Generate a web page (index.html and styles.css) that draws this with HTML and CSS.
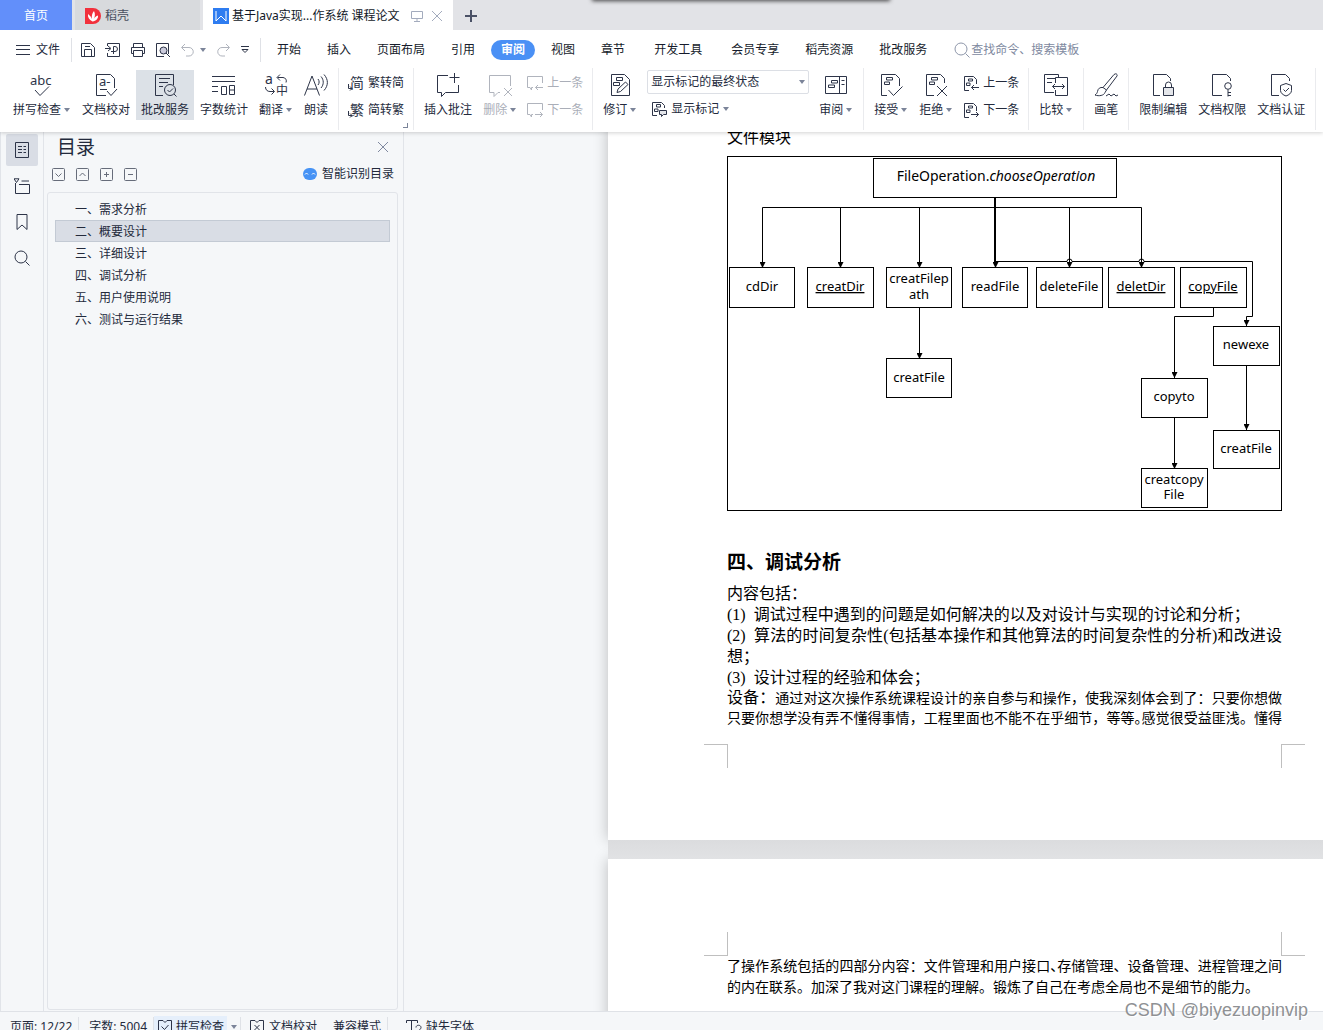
FILE: index.html
```html
<!DOCTYPE html>
<html lang="zh-CN">
<head>
<meta charset="utf-8">
<title>基于Java实现...作系统 课程论文</title>
<link rel="stylesheet" href="styles.css">
</head>
<body>
<svg class="sprite" aria-hidden="true">
  <symbol id="caret" viewBox="0 0 6 4"><path class="solid" d="M0 0h6L3 4z"/></symbol>
  <symbol id="close" viewBox="0 0 12 12"><path d="M1 1l10 10M11 1L1 11"/></symbol>
  <symbol id="monitor" viewBox="0 0 12 12"><path d="M.5 1.500h11v7H.5zM6 8.500v3M3 11.500h6"/></symbol>
  <symbol id="menu" viewBox="0 0 14 12"><path d="M0 1.500h14M0 5.500h14M0 10.500h14"/></symbol>
  <symbol id="save" viewBox="0 0 16 16"><path d="M1.500 1.500h9l4 4v9h-13zM4.500 14.500v-7h7v7M5 4.500h5"/></symbol>
  <symbol id="export" viewBox="0 0 16 16"><path d="M2.500 4V1.500h12v13h-12V11M0 6.500h5M3 4l3 2.500L3 9M8.500 12V4.500H10a2 2 0 010 5H6"/></symbol>
  <symbol id="print" viewBox="0 0 16 16"><path d="M3.500 5V1.500h9V5M3.500 11.500h-2v-6h13v6h-2M3.500 8.500h9v6h-9z"/></symbol>
  <symbol id="preview" viewBox="0 0 16 16"><path d="M9 14.500H1.500v-13h12V12"/><circle cx="8.500" cy="8.500" r="3.500" fill="#ccd"/><path d="M11 11l4 4"/></symbol>
  <symbol id="undo" viewBox="0 0 16 16"><path d="M5 2L1.500 5.500 5 9M2 5.500h7a4.200 4.200 0 010 8.500H6"/></symbol>
  <symbol id="redo" viewBox="0 0 16 16"><path d="M11 2l3.500 3.500L11 9M14 5.500H7A4.200 4.200 0 007 14h3"/></symbol>
  <symbol id="more" viewBox="0 0 10 8"><path d="M1 .5h8M2 3.500l3 3 3-3z"/></symbol>
  <symbol id="search" viewBox="0 0 16 16"><circle cx="7" cy="7" r="6"/><path d="M11.500 11.500l4 4"/></symbol>

  <symbol id="review-doc" viewBox="0 0 24 24"><path d="M10 22.500H2.500v-21h18V12M6 5.500h11M6 9.500h9M6 13.500h4"/><circle cx="17" cy="17" r="5.500"/><path d="M14.500 17l2 2 3.500-3.500M21 21l2.500 2.500"/></symbol>
  <symbol id="count" viewBox="0 0 24 24"><path d="M0 3.500h23M0 8.500h23M0 13.500h6M0 18.500h6M9.500 13.500h5v8h-5zM17.500 12.500h5v9h-5zM17.500 17h5"/></symbol>
  <symbol id="read" viewBox="0 0 24 24"><path d="M.5 22.500L8 3l7.500 19.500M3 16h10M14 6c1.500 2 1.500 4 0 6M17 3.500c3 3.500 3 8 0 11.500M20 1.500c4.500 5 4.500 11 0 16"/></symbol>
  <symbol id="comment-add" viewBox="0 0 24 24"><path d="M12 2.500H1.500v17h4v4l4-4h13V12M18.500 0v10M13.500 4.500h10"/></symbol>
  <symbol id="comment-del" viewBox="0 0 24 24"><path d="M12 19.500h-2l-4 4v-4H1.500v-17h21V13M16 15l8 8M24 15l-8 8"/></symbol>
  <symbol id="comment-prev" viewBox="0 0 16 16"><path d="M6 12.500H4.500v2.500L3 12.500H.5v-11h15V8M16 12.500H8.500M11 10l-2.500 2.500L11 15"/></symbol>
  <symbol id="comment-next" viewBox="0 0 16 16"><path d="M6 12.500H4.500v2.500L3 12.500H.5v-11h15V8M8 12.500h7.500M13 10l2.500 2.500L13 15"/></symbol>
  <symbol id="revise" viewBox="0 0 24 24"><path d="M3.500 1.500h13l5 5v16h-18zM8.500 4.500h6v3h-6zM5.500 9.500h6v3h-6zM9 19.500l1-3.500 7.500-7 2.500 2.500-7.500 7z"/></symbol>
  <symbol id="marks" viewBox="0 0 16 16"><path d="M6 14.500H1.500v-13h9l3 3V7M5.500 3.500h4v2.500h-4zM3.500 8h3.500v2.500H3.500z"/><path fill="#e4e6ea" d="M8.500 9.500h7v4h-3l-2 2v-2h-2z"/></symbol>
  <symbol id="pane" viewBox="0 0 24 24"><path d="M1.500 3.500h21v17h-21zM15.500 3.500v17M7.500 7.500h6v2.500h-6zM4.500 12h6v2.500h-6zM17.500 7.500h3M17.500 11.500h3"/></symbol>
  <symbol id="accept" viewBox="0 0 24 24"><path d="M8 22.500H2.500v-21h14l4 4V13M7.500 4.500h6v2.500h-6zM5.500 9h5v2.500h-5zM9.500 17l5 5.500 9-9"/></symbol>
  <symbol id="reject" viewBox="0 0 24 24"><path d="M10 22.500H2.500v-21h14l4 4V10M7.500 4.500h6v2.500h-6zM5.500 9h5v2.500h-5zM13 13l10 10M23 13L13 23"/></symbol>
  <symbol id="prev" viewBox="0 0 16 16"><path d="M6 15.500H1.500v-14h9l3 3V9M5.500 4h4v2h-4zM3.500 8h3.500v2.500H3.500zM16 12.500H8.500M11 10l-2.500 2.500L11 15"/></symbol>
  <symbol id="next" viewBox="0 0 16 16"><path d="M6 15.500H1.500v-14h9l3 3V9M5.500 4h4v2h-4zM3.500 8h3.500v2.500H3.500zM8 12.500h7.500M13 10l2.500 2.500L13 15"/></symbol>
  <symbol id="compare" viewBox="0 0 24 24"><path d="M10 19.500H.5v-18h14v3M3 5.500h8M3 9.500h5M11.500 10V4.500h12v18h-12V17M8.500 13.500h12M11 11l-2.500 2.500L11 16M18 11l2.500 2.500L18 16"/></symbol>
  <symbol id="brush" viewBox="0 0 24 24"><path d="M21.500.8c1.500 0 2 1.200 1.500 2.200L12.500 17 9 14.500 20 1.500zM9 14.500c-3-.5-5 1-5.500 4-.3 1.500-1 2.500-2.500 3.500 4 1.500 9 .5 10-2.500l1.500-2.500M12 23l3-2 2 2 3-2 2 2 2-1"/></symbol>
  <symbol id="doc-lock" viewBox="0 0 24 24"><path d="M9 22.500H2.500v-21h13l4 4V8"/><path fill="#e4e6ea" d="M12.500 14.500h10v8h-10z"/><path d="M14.500 14.500V12a3 3 0 016 0v2.500"/></symbol>
  <symbol id="doc-key" viewBox="0 0 24 24"><path d="M12 22.500H2.500v-21h14l4 4V8M18 16.500v7M18 19.500h3M18 22.500h3"/><circle cx="18" cy="13" r="3.300"/></symbol>
  <symbol id="doc-shield" viewBox="0 0 24 24"><path d="M10 22.500H2.500v-21h14l4 4V8M17 10.500l5.500 2v5c0 2.500-2.500 4.500-5.500 5.500-3-1-5.500-3-5.500-5.500v-5zM14.500 16.500l2 2 3.500-3.500"/></symbol>

  <symbol id="outline" viewBox="0 0 16 16"><path d="M1.500.5h13v15h-13zM4 4.500h4M9.500 4.500H12M4 7.500h4M9.500 7.500H12M4 10.500h4M9.500 10.500H12"/></symbol>
  <symbol id="nav" viewBox="0 0 16 16"><path d="M0 .8h5L2.500 4.500zM7.500 3H15M1.500 5v10.500h14V6.500H5"/></symbol>
  <symbol id="bookmark" viewBox="0 0 16 16"><path d="M3 .5h10v15l-5-4.500-5 4.500z"/></symbol>
  <symbol id="box-down" viewBox="0 0 13 13"><rect x=".5" y=".5" width="12" height="12" rx="1"/><path d="M3.500 5.500l3 3 3-3"/></symbol>
  <symbol id="box-up" viewBox="0 0 13 13"><rect x=".5" y=".5" width="12" height="12" rx="1"/><path d="M3.500 8l3-3 3 3"/></symbol>
  <symbol id="box-plus" viewBox="0 0 13 13"><rect x=".5" y=".5" width="12" height="12" rx="1"/><path d="M4 6.500h5M6.500 4v5"/></symbol>
  <symbol id="box-minus" viewBox="0 0 13 13"><rect x=".5" y=".5" width="12" height="12" rx="1"/><path d="M4 6.500h5"/></symbol>
  <symbol id="book-check" viewBox="0 0 16 16"><path d="M6 1.500H1.500v13h13v-13H10L8 3.500 6 1.500M4.500 7.500l3 3 4-4.500"/></symbol>
  <symbol id="book-x" viewBox="0 0 16 16"><path d="M6 1.500H1.500v13h13v-13H10L8 3.500 6 1.500M5.500 6l5 5M10.500 6l-5 5"/></symbol>
  <symbol id="font-missing" viewBox="0 0 16 16"><path d="M.5 4V1.500h11V4M5.500 1.500v13H8M10 8.500c0-3 5-3 5 0 0 2-2.500 2-2.500 4.500M12.500 14v1.500"/></symbol>
</svg>

<header>
  <nav class="tabs" aria-label="文档标签">
    <button class="tab home">首页</button>
    <button class="tab shell">
      <svg class="i16" viewBox="0 0 16 16"><path class="red" d="M0 0h8a8 8 0 010 16H0z"/><path class="leaf" d="M7.500 13.500C4 12 2.500 9 3 6c2 1.500 3 3 4 5-.5-3 0-6 2-8 1.500 3 1 6-.5 8.500C9.500 9.500 11 8 13 7.500c.5 3-2 5.500-5.500 6z"/></svg>
      稻壳</button>
    <div class="tab current">
      <svg class="i16" viewBox="0 0 16 16"><path class="blue" d="M0 0h16v16H0z"/><path class="mark" d="M3 3v10l5-5 5 5V3"/></svg>
      <span>基于Java实现...作系统 课程论文</span>
      <svg class="i12 pale"><use href="#monitor"/></svg>
      <button class="plain" aria-label="关闭标签"><svg class="i12 pale"><use href="#close"/></svg></button>
    </div>
    <button class="tab add" aria-label="新建"><svg class="i12" viewBox="0 0 12 12"><path class="bold" d="M0 6h12M6 0v12"/></svg></button>
    <span class="dropshade"></span>
  </nav>

  <div class="menubar">
    <button class="file"><svg class="hamb"><use href="#menu"/></svg>文件</button>
    <div class="quick">
      <button class="plain" aria-label="保存"><svg class="i16"><use href="#save"/></svg></button>
      <button class="plain" aria-label="输出为PDF"><svg class="i16"><use href="#export"/></svg></button>
      <button class="plain" aria-label="打印"><svg class="i16"><use href="#print"/></svg></button>
      <button class="plain" aria-label="打印预览"><svg class="i16"><use href="#preview"/></svg></button>
      <button class="plain split" aria-label="撤销"><svg class="i16 off"><use href="#undo"/></svg><svg class="caret"><use href="#caret"/></svg></button>
      <button class="plain" aria-label="恢复"><svg class="i16 off"><use href="#redo"/></svg></button>
      <button class="plain more" aria-label="更多"><svg><use href="#more"/></svg></button>
    </div>
    <nav class="menus" aria-label="功能区">
      <button>开始</button><button>插入</button><button>页面布局</button><button>引用</button><button class="on">审阅</button><button>视图</button><button>章节</button><button class="dev">开发工具</button><button>会员专享</button><button>稻壳资源</button><button>批改服务</button>
    </nav>
    <label class="find"><svg class="i16"><use href="#search"/></svg><input type="text" aria-label="查找命令" placeholder="查找命令、搜索模板"></label>
  </div>

  <div class="ribbon">
    <div class="group first">
      <button class="big"><svg viewBox="0 0 24 24"><text x="0" y="12" font-size="13">abc</text><path d="M5 17l5 5.500 9-9"/></svg><span>拼写检查<svg class="caret"><use href="#caret"/></svg></span></button>
      <button class="big"><svg viewBox="0 0 24 24"><path d="M12 22.500H2.500v-21h14l4 4V15M6 16.500h7M13 18l4 4.500 6-6.500"/><text x="5" y="13" font-size="13">a-</text></svg><span>文档校对</span></button>
      <button class="big pressed"><svg><use href="#review-doc"/></svg><span>批改服务</span></button>
      <button class="big"><svg><use href="#count"/></svg><span>字数统计</span></button>
      <button class="big"><svg viewBox="0 0 24 24"><text x="1" y="11" font-size="14">a</text><text x="12" y="22" font-size="12">中</text><path d="M16 1.500L13 4.500l3 3M13.500 4.500H19a3.500 3.500 0 013 5M1.500 14c0 3 2 4.500 4.500 4.500h4M7.500 15.500l3 3-3 3"/></svg><span>翻译<svg class="caret"><use href="#caret"/></svg></span></button>
      <button class="big"><svg><use href="#read"/></svg><span>朗读</span></button>
    </div>
    <div class="group">
      <div class="stack">
        <button class="small"><svg viewBox="0 0 16 16"><text x="2" y="13" font-size="14">简</text><path d="M.5 9v4.500H4M2 11.500l2 2-2 2"/></svg>繁转简</button>
        <button class="small"><svg viewBox="0 0 16 16"><text x="2" y="13" font-size="14">繁</text><path d="M.5 9v4.500H4M2 11.500l2 2-2 2"/></svg>简转繁</button>
      </div>
      <span class="launcher"></span>
    </div>
    <div class="group">
      <button class="big"><svg><use href="#comment-add"/></svg><span>插入批注</span></button>
      <button class="big off"><svg><use href="#comment-del"/></svg><span>删除<svg class="caret"><use href="#caret"/></svg></span></button>
      <div class="stack">
        <button class="small off"><svg><use href="#comment-prev"/></svg>上一条</button>
        <button class="small off"><svg><use href="#comment-next"/></svg>下一条</button>
      </div>
    </div>
    <div class="group">
      <button class="big"><svg><use href="#revise"/></svg><span>修订<svg class="caret"><use href="#caret"/></svg></span></button>
      <div class="stack state">
        <div class="pick"><select aria-label="标记状态"><option>显示标记的最终状态</option></select><svg class="caret"><use href="#caret"/></svg></div>
        <button class="small"><svg><use href="#marks"/></svg>显示标记<svg class="caret"><use href="#caret"/></svg></button>
      </div>
      <button class="big"><svg><use href="#pane"/></svg><span>审阅<svg class="caret"><use href="#caret"/></svg></span></button>
    </div>
    <div class="group">
      <button class="big"><svg><use href="#accept"/></svg><span>接受<svg class="caret"><use href="#caret"/></svg></span></button>
      <button class="big"><svg><use href="#reject"/></svg><span>拒绝<svg class="caret"><use href="#caret"/></svg></span></button>
      <div class="stack">
        <button class="small"><svg><use href="#prev"/></svg>上一条</button>
        <button class="small"><svg><use href="#next"/></svg>下一条</button>
      </div>
    </div>
    <div class="group"><button class="big"><svg><use href="#compare"/></svg><span>比较<svg class="caret"><use href="#caret"/></svg></span></button></div>
    <div class="group"><button class="big"><svg><use href="#brush"/></svg><span>画笔</span></button></div>
    <div class="group">
      <button class="big"><svg><use href="#doc-lock"/></svg><span>限制编辑</span></button>
      <button class="big"><svg><use href="#doc-key"/></svg><span>文档权限</span></button>
      <button class="big"><svg><use href="#doc-shield"/></svg><span>文档认证</span></button>
    </div>
  </div>
</header>

<main>
  <nav class="rail" aria-label="导航窗格">
    <button class="on" aria-label="目录"><svg class="i16"><use href="#outline"/></svg></button>
    <button aria-label="章节"><svg class="i16"><use href="#nav"/></svg></button>
    <button aria-label="书签"><svg class="i16"><use href="#bookmark"/></svg></button>
    <button aria-label="查找"><svg class="i16"><use href="#search"/></svg></button>
  </nav>
  <aside>
    <div class="panel-head"><h2>目录</h2><button class="plain" aria-label="关闭"><svg class="i12"><use href="#close"/></svg></button></div>
    <div class="panel-tools">
      <button class="plain" aria-label="展开"><svg><use href="#box-down"/></svg></button>
      <button class="plain" aria-label="收起"><svg><use href="#box-up"/></svg></button>
      <button class="plain" aria-label="放大"><svg><use href="#box-plus"/></svg></button>
      <button class="plain" aria-label="缩小"><svg><use href="#box-minus"/></svg></button>
      <button class="plain smart"><svg viewBox="0 0 14 12"><rect class="face" width="14" height="12" rx="6"/><path class="eyes" d="M2 6.500l1.500-1.500L5 6.500M9 6.500l1.500-1.500L12 6.500"/></svg>智能识别目录</button>
    </div>
    <ul class="toc">
      <li><a href="#s1">一、需求分析</a></li>
      <li class="on"><a href="#s2">二、概要设计</a></li>
      <li><a href="#s3">三、详细设计</a></li>
      <li><a href="#s4">四、调试分析</a></li>
      <li><a href="#s5">五、用户使用说明</a></li>
      <li><a href="#s6">六、测试与运行结果</a></li>
    </ul>
  </aside>
  <div class="canvas">
    <article class="page">
      <p>文件模块</p>
      <svg class="chart" viewBox="0 0 555 355" role="img" aria-label="文件模块结构图">
        <defs><marker id="tip" viewBox="0 0 6 6" refX="6" refY="3" markerWidth="6" markerHeight="6" orient="auto" markerUnits="userSpaceOnUse"><path d="M0 0l6 3-6 3z"/></marker></defs>
        <rect x=".5" y=".5" width="554" height="354"/>
        <g class="wires">
          <path d="M268.500 41v10.500H35.500V112"/>
          <path d="M268.500 51.500H113.500V112"/>
          <path d="M268.500 51.500H192.500V112"/>
          <path d="M268.500 41V112"/>
          <path d="M268.500 51.500H342.500V112"/>
          <path d="M268.500 51.500H414.500V112"/>
          <path d="M268.500 105.500H340a2.500 2.500 0 015 0H412a2.500 2.500 0 015 0H525.500V160.500H519.500V170"/>
          <path d="M192.500 151V203"/>
          <path d="M486.500 151v9.500H447.500V222"/>
          <path d="M519.500 210V274"/>
          <path d="M447.500 262V313"/>
        </g>
        <path class="trunk" d="M268 41V106"/>
        <g>
          <rect x="146.500" y="2.500" width="243" height="39"/>
          <rect x="2.500" y="111.500" width="65" height="40"/>
          <rect x="80.500" y="111.500" width="66" height="40"/>
          <rect x="159.500" y="111.500" width="65" height="40"/>
          <rect x="235.500" y="111.500" width="65" height="40"/>
          <rect x="309.500" y="111.500" width="66" height="40"/>
          <rect x="381.500" y="111.500" width="66" height="40"/>
          <rect x="453.500" y="111.500" width="66" height="40"/>
          <rect x="159.500" y="202.500" width="65" height="39"/>
          <rect x="486.500" y="170.500" width="66" height="39"/>
          <rect x="414.500" y="222.500" width="66" height="39"/>
          <rect x="486.500" y="274.500" width="66" height="38"/>
          <rect x="414.500" y="312.500" width="66" height="39"/>
        </g>
        <text x="269" y="25" class="root">FileOperation.<tspan class="it">chooseOperation</tspan></text>
        <text x="35" y="135">cdDir</text>
        <text x="113" y="135" class="un">creatDir</text>
        <text x="192" y="127">creatFilep</text><text x="192" y="143">ath</text>
        <text x="268" y="135">readFile</text>
        <text x="342" y="135">deleteFile</text>
        <text x="414" y="135" class="un">deletDir</text>
        <text x="486" y="135" class="un">copyFile</text>
        <text x="192" y="226">creatFile</text>
        <text x="519" y="193">newexe</text>
        <text x="447" y="245">copyto</text>
        <text x="519" y="297">creatFile</text>
        <text x="447" y="328">creatcopy</text><text x="447" y="343">File</text>
      </svg>
      <h1 id="s4">四、调试分析</h1>
      <p>内容包括：</p>
      <p>(1)&nbsp; 调试过程中遇到的问题是如何解决的以及对设计与实现的讨论和分析；</p>
      <p>(2)&nbsp; 算法的时间复杂性(包括基本操作和其他算法的时间复杂性的分析)和改进设想；</p>
      <p>(3)&nbsp; 设计过程的经验和体会；</p>
      <p class="runon">设备：<span class="fine">通过对这次操作系统课程设计的亲自参与和操作，使我深刻体会到了：只要你想做只要你想学没有弄不懂得事情，工程里面也不能不在乎细节，等等<span class="half">。</span>感觉很受益匪浅。懂得</span></p>
      <div class="crop bottom"><i></i><i></i></div>
    </article>
    <div class="gap"></div>
    <article class="page second">
      <div class="crop top"><i></i><i></i></div>
      <p class="fine">了操作系统包括的四部分内容：文件管理和用户接口<span class="half">、</span>存储管理、设备管理、进程管理之间的内在联系。加深了我对这门课程的理解。锻炼了自己在考虑全局也不是细节的能力。</p>
    </article>
  </div>
</main>

<footer>
  <span class="cell">页面: 12/22</span>
  <span class="cell">字数: 5004</span>
  <button class="cell check"><span><svg class="i16"><use href="#book-check"/></svg>拼写检查</span><svg class="caret"><use href="#caret"/></svg></button>
  <button class="cell open"><svg class="i16"><use href="#book-x"/></svg>文档校对</button>
  <button class="cell">兼容模式</button>
  <button class="cell open missing"><svg class="i16"><use href="#font-missing"/></svg>缺失字体</button>
</footer>
<div class="watermark">CSDN @biyezuopinvip</div>
</body>
</html>
```
FILE: styles.css
```css
* { box-sizing: border-box; }

body {
  margin: 0;
  height: 100vh;
  overflow: hidden;
  display: flex;
  flex-direction: column;
  background: #f5f7f9;
  color: #232a3c;
  font: 12px/16px "Noto Sans", "Noto Sans CJK SC", sans-serif;
}

button, input, select { font: inherit; color: inherit; }
button { border: 0; margin: 0; padding: 0; background: none; white-space: nowrap; }
svg { flex: none; fill: none; stroke: #2d3448; stroke-width: 1; overflow: visible; }
svg text { fill: #2d3448; stroke: none; }
.sprite { position: absolute; width: 0; height: 0; }
.i16 { width: 16px; height: 16px; }
.i12 { width: 12px; height: 12px; }
.pale { stroke: #a3abbd; }
.caret { width: 6px; height: 4px; }
.solid { fill: #7b8499; stroke: none; }
.plain { display: flex; align-items: center; }

header { flex: none; position: relative; z-index: 1; background: #fff; box-shadow: 0 1px 4px rgba(0, 0, 0, .18); }

/* document tabs */
.tabs { display: flex; gap: 3px; height: 30px; background: #e2e3e7; position: relative; }
.tab { display: flex; align-items: center; height: 30px; padding-top: 1px; }
.home { width: 72px; justify-content: center; background: #628ffa; color: #fff; }
.shell { width: 125px; padding-left: 10px; gap: 4px; background: #d8dadd; color: #4a5060; }
.current { padding-left: 10px; padding-right: 10px; gap: 3px; background: #fff; color: #111827; }
.current .pale { margin-left: 8px; }
.current .plain { margin-left: -3px; }
.add { padding-left: 9px; padding-right: 9px; }
.red { fill: #f2303c; stroke: none; }
.leaf { fill: #fff; stroke: none; }
.blue { fill: #2e7cf0; stroke: none; }
.mark { stroke: #fff; }
.bold { stroke: #4a5166; stroke-width: 2; }
.dropshade { position: absolute; left: 592px; top: -8px; width: 298px; height: 8px; background: #888; box-shadow: 0 1px 4px rgba(0, 0, 0, .7); }

/* menu row */
.menubar { display: flex; align-items: center; height: 38px; padding-top: 1px; }
.file { display: flex; align-items: center; gap: 6px; height: 24px; padding: 0 11px 0 16px; border-right: 1px solid #dfe1e6; }
.hamb { width: 14px; height: 12px; }
.quick { display: flex; align-items: center; gap: 9px; height: 24px; padding: 0 10px 0 8px; border-right: 1px solid #dfe1e6; }
.split { gap: 4px; }
.off { color: #aaaeb8; stroke: #b0b4bd; }
.off svg { stroke: #b0b4bd; }
.more svg { width: 10px; height: 8px; }
.menus { display: flex; align-items: center; padding-left: 3px; }
.menus button { height: 20px; margin: 0 3px; padding: 0 10px; border-radius: 10px; color: #151b2b; }
.menus .on { background: #4a90f5; color: #fff; font-weight: 700; }
.menus .dev { margin: 0 6px; }
.find { display: flex; align-items: center; margin-left: 14px; }
.find svg { stroke: #8e97aa; }
.find input { width: 130px; padding: 0 0 0 1px; border: 0; background: none; }
.find input::placeholder { color: #8089a0; opacity: 1; }

/* ribbon */
.ribbon { display: flex; height: 64px; padding-bottom: 2px; }
.group { flex: none; display: flex; gap: 1px; padding: 2px 5px 0; border-right: 1px solid #eaebee; position: relative; }
.first { padding-left: 8px; }
.big { display: flex; flex-direction: column; align-items: center; gap: 5px; height: 50px; padding: 3px 5px 2px; }
.big > svg { width: 24px; height: 24px; }
.big span { display: flex; align-items: center; }
.big .caret { margin: 0 1px 0 3px; }
.pressed { background: #dce1e7; }
.stack { display: flex; flex-direction: column; gap: 1px; }
.small { display: flex; align-items: center; gap: 4px; height: 26px; padding: 0 4px; }
.small > svg:first-child { width: 16px; height: 16px; }
.group .state { gap: 2px; margin: 0 4px; }
.pick { position: relative; }
.pick select { appearance: none; display: block; width: 162px; height: 24px; padding: 0 3px; border: 1px solid #dcdfe5; border-radius: 2px; background: #fff; }
.pick .caret { position: absolute; right: 4px; top: 10px; }
.launcher { position: absolute; right: 5px; bottom: 2px; width: 5px; height: 5px; border: solid #7b8499; border-width: 0 1px 1px 0; }

/* work area */
main { flex: 1; min-height: 0; display: flex; }
.rail { flex: none; width: 44px; display: flex; flex-direction: column; gap: 4px; padding: 2px 5px; border: solid #e1e4e9; border-width: 0 1px; }
.rail button { display: flex; align-items: center; justify-content: center; width: 32px; height: 32px; border-radius: 2px; }
.rail .on { background: #d9dde5; }
aside { flex: none; width: 360px; display: flex; flex-direction: column; padding: 0 5px 1px 3px; border-right: 1px solid #e1e4e9; }
.panel-head { display: flex; justify-content: space-between; align-items: center; height: 30px; padding: 0 9px 0 10px; }
.panel-head h2 { margin: 0; font-size: 19px; line-height: 30px; font-weight: 400; }
.panel-head svg { stroke: #8089a0; }
.panel-tools { display: flex; align-items: center; gap: 11px; height: 24px; margin-bottom: 6px; padding: 0 4px 0 5px; }
.panel-tools svg { width: 13px; height: 13px; stroke: #666c7a; }
.smart { gap: 5px; margin-left: auto; }
.panel-tools .smart svg { width: 14px; height: 12px; }
.smart .face { fill: #4793f5; stroke: none; }
.smart .eyes { stroke: #fff; }
.toc { flex: 1; list-style: none; margin: 0; padding: 5px 7px; border: 1px solid #e1e4e9; border-radius: 3px; }
.toc li { height: 22px; border: 1px solid transparent; padding-left: 19px; line-height: 21px; }
.toc a { color: inherit; text-decoration: none; }
.toc .on { background: #d9dde5; border-color: #c3cad4; }

/* document */
.canvas { flex: 1; min-width: 0; overflow: hidden; padding-left: 204px; }
.page {
  width: 793px;
  margin-top: -5px;
  padding: 0 119px 72px;
  background: #fff;
  box-shadow: 0 0 14px rgba(0, 0, 0, .24);
  color: #000;
  font: 16px/21px "Liberation Serif", "Noto Sans CJK SC", serif;
}
.page p { margin: 0; text-align: justify; }
.page h1 { margin: 0 0 6px; font-size: 19px; line-height: 28px; font-weight: 700; }
.page .runon { text-align-last: justify; line-height: 20px; }
.page .fine { font-size: 14px; }
.page .runon .fine { line-height: 18px; }
.half { font-feature-settings: "halt"; }
.gap { position: relative; width: 793px; height: 19px; background: linear-gradient(#dbdcde, #e1e2e4); }
.second { margin-top: 0; padding-top: 73px; min-height: 300px; }
.crop { display: flex; justify-content: space-between; margin: 0 -23px; }
.crop i { width: 24px; height: 24px; border: 0 solid #bfbfbf; }
.bottom { margin-top: 16px; }
.bottom i { border-top-width: 1px; }
.top i { border-bottom-width: 1px; }
.crop i:first-child { border-right-width: 1px; }
.crop i:last-child { border-left-width: 1px; }

.chart { display: block; width: 555px; height: 355px; margin: 8px 0 38px; stroke: #000; }
.chart text { fill: #000; font: 13px "Noto Sans", sans-serif; text-anchor: middle; }
.chart .root { font-size: 14px; }
.chart .it { font-style: italic; }
.chart .un { text-decoration: underline; }
.wires path { marker-end: url(#tip); }
#tip path { fill: #000; stroke: none; }
.trunk { stroke-width: 2; }

/* status bar */
footer { flex: none; display: flex; height: 19px; overflow: hidden; border-top: 1px solid #dfe2e7; padding-top: 5px; }
.cell { display: flex; align-items: center; gap: 4px; flex: none; height: 20px; padding: 0 6px 0 10px; border-right: 1px solid #dfe2e7; }
.check { padding: 0 3px 0 0; }
.check span { display: flex; align-items: center; gap: 3px; height: 22px; padding: 0 3px; background: #e5effb; }
.open { padding-left: 8px; border-right: 0; }
.missing { padding-left: 18px; }

.watermark { position: absolute; right: 15px; bottom: 9px; color: #8f9194; font: 18px/22px "Liberation Sans", sans-serif; text-shadow: 1px 1px 0 #fff; }
```
